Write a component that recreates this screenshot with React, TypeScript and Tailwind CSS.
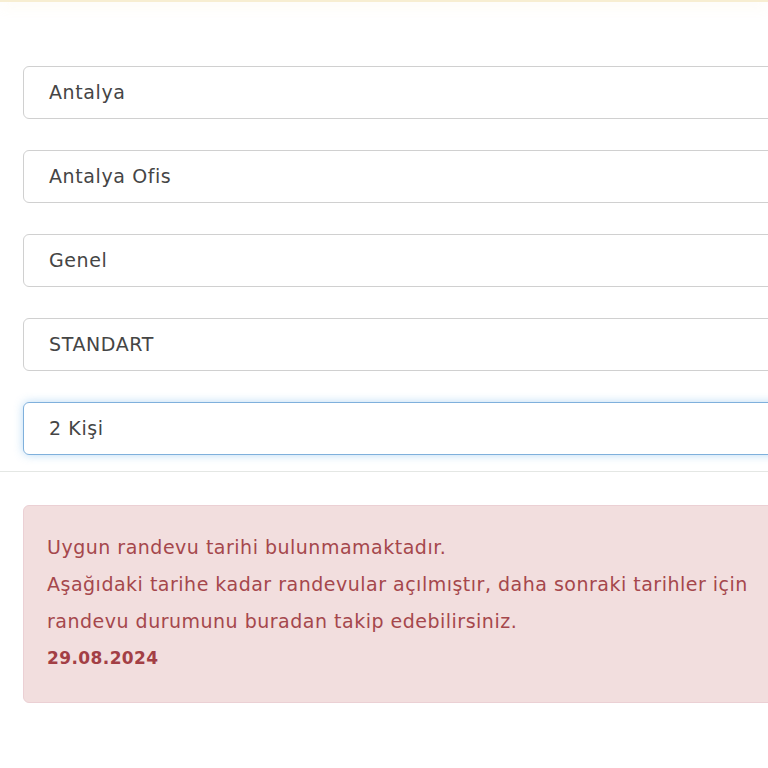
import React from "react";

const fields = ["Antalya", "Antalya Ofis", "Genel", "STANDART"];

export default function App() {
  return (
    <div className="w-[768px] h-[768px] overflow-hidden bg-white relative font-['DejaVu_Sans',sans-serif]">
      <div className="h-[2px] bg-[#f7eed2] shadow-[0_3px_14px_rgba(245,225,160,0.45)]" />
      <div className="pt-[64px] pl-[23px] w-[820px] flex flex-col gap-[31px]">
        {fields.map((f) => (
          <div
            key={f}
            className="h-[53px] flex items-center border-[1.5px] border-[#d0d0d0] rounded-[6px] pl-[25px] text-[19px] tracking-[0.6px] text-[#454545]"
          >
            {f}
          </div>
        ))}
        <div className="h-[53px] flex items-center border-[1.5px] border-[#7fb0dc] rounded-[6px] pl-[25px] text-[19px] tracking-[0.6px] text-[#454545] shadow-[0_0_10px_rgba(102,175,233,0.45)]">
          2 Kişi
        </div>
      </div>
      <div className="mt-[16px] border-t-[1.5px] border-[#e4e7e4]" />
      <div className="mt-[33px] ml-[23px] w-[820px] h-[198px] bg-[#f2dede] border-[1.5px] border-[#ebd0d4] rounded-[6px] pt-[23px] pl-[23px] text-[19px] tracking-[0.5px] leading-[37px] text-[#a5474c]">
        <div>Uygun randevu tarihi bulunmamaktadır.</div>
        <div>Aşağıdaki tarihe kadar randevular açılmıştır, daha sonraki tarihler için</div>
        <div>randevu durumunu buradan takip edebilirsiniz.</div>
        <div className="font-bold text-[17px] tracking-[0.4px] text-[#a33f45]">29.08.2024</div>
      </div>
    </div>
  );
}
